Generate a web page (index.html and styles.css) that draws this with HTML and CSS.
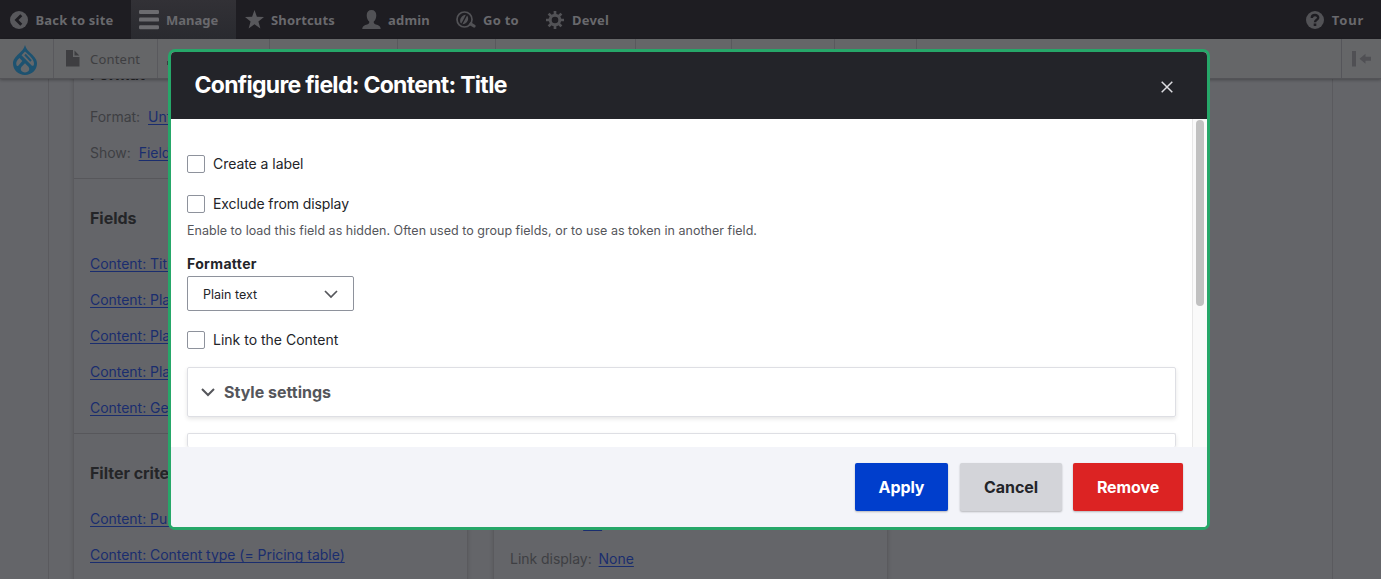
FILE: index.html
```html
<!DOCTYPE html>
<html lang="en">
<head>
<meta charset="utf-8">
<title>Configure field: Content: Title</title>
<link rel="stylesheet" href="styles.css">
</head>
<body>
<header class="toolbar">
  <nav class="bar">
    <a class="tab tab-back"><svg width="18" height="18" viewBox="0 0 18 18"><circle cx="9" cy="9" r="9" fill="#58585c"/><path d="M11.3 4.2 6.5 9l4.8 4.8" fill="none" stroke="#1e1d22" stroke-width="2.8"/></svg><span>Back to site</span></a>
    <a class="tab tab-manage"><svg width="20" height="20" viewBox="0 0 20 20" fill="#6c6c70"><rect y="0" width="20" height="4" rx="1.2"/><rect y="7.6" width="20" height="4" rx="1.2"/><rect y="15.2" width="20" height="4" rx="1.2"/></svg><span>Manage</span></a>
    <a class="tab tab-shortcuts"><svg width="19" height="19" viewBox="0 0 19 19" fill="#58585c"><path d="M9.5 0l2.4 6.8 7.1.2-5.6 4.4 2 7-5.900-4.100L3.600 18.400l2-7L0 7l7.100-.2z"/></svg><span>Shortcuts</span></a>
    <a class="tab tab-user"><svg width="19" height="20" viewBox="0 0 19 20" fill="#525256"><path d="M9.500 0C6.500 0 4.700 2 4.700 5.200c0 2.700 1 5 2.500 6.300.4 1.700-.3 2.300-2.100 3C2.500 15.300.300 16 .300 19h18.400c0-3-2.200-3.700-4.800-4.500-1.800-.7-2.500-1.300-2.100-3 1.500-1.300 2.500-3.600 2.500-6.300C14.300 2 12.500 0 9.500 0z"/></svg><span>admin</span></a>
    <a class="tab tab-goto"><svg width="20" height="18" viewBox="0 0 20 18"><circle cx="8.500" cy="8.500" r="7.500" fill="none" stroke="#525256" stroke-width="1.700"/><path d="M4.300 11.500C3.500 7.500 6.200 4 9.800 3.800 8.600 6.500 7.400 9 5.300 12.500zM6.500 13.200c1.500-3 3-5.500 4.600-8.700 2.600 3.200.2 8.600-4.600 8.700z" fill="#525256"/><path d="M12.500 13.500l2-2.500 4.700 3c1.200 1-.2 3.300-1.700 2.600z" fill="#525256"/></svg><span>Go to</span></a>
    <a class="tab tab-devel"><svg width="18" height="18" viewBox="0 0 18 18"><circle cx="9" cy="9" r="4.800" fill="none" stroke="#525256" stroke-width="3"/><g stroke="#525256" stroke-width="2.700"><path d="M9 0v4M9 14v4M0 9h4M14 9h4M2.600 2.600l2.900 2.900M12.500 12.500l2.900 2.900M2.600 15.400l2.900-2.900M12.500 5.500l2.900-2.900"/></g></svg><span>Devel</span></a>
    <a class="tab tab-tour"><svg width="18" height="18" viewBox="0 0 18 18"><circle cx="9" cy="9" r="9" fill="#525256"/><path d="M5.800 7C5.800 3 12.200 3.200 12.200 6.700 12.200 8.900 9 8.700 9 11.300" fill="none" stroke="#1e1d22" stroke-width="2.400"/><rect x="7.700" y="12.500" width="2.600" height="2.500" fill="#1e1d22"/></svg><span>Tour</span></a>
  </nav>
  <nav class="tray">
    <a class="tray-item w-logo"><svg width="24" height="30" viewBox="0 0 24 30"><path d="M12 0C11 4 8.500 6 5.500 9 2.500 12 0 14.500 0 18.500 0 25 5.400 30 12 30s12-5 12-11.500c0-4-2.500-6.500-5.500-9.500C15.500 6 13 4 12 0z" fill="#1d5270"/><g fill="#65686b"><path d="M12 18.300l3.200 3.200c2.400 2.600.4 5.900-3.200 5.900s-5.600-3.300-3.200-5.900z"/><path d="M6.500 13l2.800 2.900-3.800 4.600c-.9.900-1.700.8-2.100-.4-.9-2.800.8-5 3.100-7.100z"/><path d="M12 6.500c3.500 3.200 9.400 7.800 9 12.400-.2 2.100-1.400 2.600-2.800 1.100L8.500 10.300z"/></g><path d="M12 9.500l6 6.500" stroke="#1d5270" stroke-width="2"/></svg></a>
    <a class="tray-item w-content"><svg width="14" height="17" viewBox="0 0 14 17" fill="#3e3e41"><path d="M0 0h7v7h6.500v9.500H0zM8.500.5l4.800 5H8.500z"/></svg><span>Content</span></a>
    <a class="tray-item w-structure"><svg width="16" height="16" viewBox="0 0 16 16" fill="#3e3e41"><path d="M6 1h4v4H9v3h5v6h-4v-4H6v4H0V10h2V8h5V5H6z"/></svg></a>
    <a class="tray-item w-appearance"></a>
    <a class="tray-item w-extend"></a>
    <a class="tray-item w-config"></a>
    <a class="tray-item w-people"></a>
    <a class="tray-item w-reports"></a>
    <a class="tray-item w-help"></a>
    <a class="tray-toggle"><svg width="20" height="16" viewBox="0 0 20 16" fill="#505054"><path d="M0 0h4v15.500H0zM7.500 7.700l6-5v3H19v4h-5.500v3z"/></svg></a>
  </nav>
</header>
<main class="page">
  <section class="column">
    <div class="bucket bucket-format">
      <h3>Format</h3>
      <p>Format: <a>Unformatted list</a></p>
      <p>Show: <a>Fields</a></p>
    </div>
    <div class="bucket">
      <h3>Fields</h3>
      <p><a>Content: Title</a></p>
      <p><a>Content: Plan</a></p>
      <p><a>Content: Plan</a></p>
      <p><a>Content: Plan</a></p>
      <p><a>Content: Get</a></p>
    </div>
    <div class="bucket bucket-filter">
      <h3>Filter criteria</h3>
      <p><a>Content: Published</a></p>
      <p><a>Content: Content type (= Pricing table)</a></p>
    </div>
  </section>
  <section class="column column-second">
    <p>Use AJAX <a>No</a></p>
    <p>Link display: <a>None</a></p>
  </section>
</main>
<div class="dialog" role="dialog">
  <div class="dialog-title">
    <h1>Configure field: Content: Title</h1>
    <svg class="close" width="12" height="12" viewBox="0 0 12 12"><path d="M.7.7l10.600 10.600M11.300.7.7 11.300" stroke="#dcdce0" stroke-width="1.500"/></svg>
  </div>
  <div class="dialog-body">
    <form class="fields">
      <label class="check"><i class="box"></i><span class="t-create">Create a label</span></label>
      <label class="check check-exclude"><i class="box"></i><span class="t-exclude">Exclude from display</span></label>
      <p class="help">Enable to load this field as hidden. Often used to group fields, or to use as token in another field.</p>
      <p class="field-label">Formatter</p>
      <div class="select"><span>Plain text</span><svg width="14" height="9" viewBox="0 0 14 9"><path d="M1 1l6 6 6-6" fill="none" stroke="#55565b" stroke-width="1.700"/></svg></div>
      <label class="check check-link"><i class="box"></i><span class="t-link">Link to the Content</span></label>
      <div class="details"><svg width="14" height="9" viewBox="0 0 14 9"><path d="M1 1l6 6 6-6" fill="none" stroke="#55565b" stroke-width="2"/></svg><span>Style settings</span></div>
      <div class="details details-cut"></div>
    </form>
    <div class="scrollbar"><div class="thumb"></div></div>
  </div>
  <div class="dialog-actions">
    <button class="button apply">Apply</button>
    <button class="button cancel">Cancel</button>
    <button class="button remove">Remove</button>
  </div>
</div>
</body>
</html>
```
FILE: styles.css
```css
* { box-sizing: border-box; }
body {
  margin: 0;
  height: 579px;
  overflow: hidden;
  background: #646569;
  color: #3e3f43;
  font-family: Inter, "Liberation Sans", sans-serif;
}
h1, h3, p { margin: 0; }
svg { flex: none; display: block; }

.toolbar {
  position: relative;
  z-index: 1;
  font-family: "Noto Sans", "Open Sans", sans-serif;
}
.bar {
  display: flex;
  height: 39px;
  background: #1e1d22;
  color: #69696d;
  font-size: 13px;
  font-weight: 700;
}
.tab {
  display: flex;
  align-items: center;
  gap: 7px;
  white-space: nowrap;
}
.tab span { padding-top: 1px; letter-spacing: .2px; }
.tab-back { width: 131px; padding-left: 10px; }
.tab-back span { margin-left: .5px; letter-spacing: .2px; }
.tab-manage { width: 105px; padding-left: 8px; background: linear-gradient(#323136, #292a2f); }
.tab-manage span { letter-spacing: 0; }
.tab-shortcuts { width: 125px; padding-left: 9px; }
.tab-shortcuts span { letter-spacing: .15px; }
.tab-user { width: 95px; padding-left: 1px; }
.tab-goto { width: 90px; }
.tab-goto span { letter-spacing: .25px; }
.tab-devel { gap: 8px; }
.tab-tour { margin-left: auto; gap: 8px; padding-right: 17px; }
.tab-tour span { letter-spacing: .8px; }

.tray {
  display: flex;
  height: 40px;
  background: #656668;
  border-bottom: 1px solid #535357;
  box-shadow: 0 1px 3px rgba(0, 0, 0, .3);
  color: #3e3e41;
  font-size: 13px;
}
.tray-item {
  display: flex;
  align-items: center;
  border-right: 1px solid #59595d;
}
.w-logo { width: 54px; padding: 3px 0 0 13px; }
.w-content { width: 104px; padding-left: 12px; gap: 10px; }
.w-content span { letter-spacing: .2px; }
.w-structure { width: 112px; padding-left: 9px; }
.w-appearance { width: 128px; }
.w-extend { width: 98px; }
.w-config { width: 140px; }
.w-people { width: 96px; }
.w-reports { width: 103px; }
.w-help { width: 82px; }
.tray-toggle {
  display: flex;
  align-items: center;
  width: 40px;
  margin-left: auto;
  padding-left: 10px;
  border-left: 1px solid #55555a;
}

.page {
  display: flex;
  align-items: flex-start;
  gap: 25px;
  width: 1285px;
  height: 522px;
  margin: -22px 0 0 48px;
  padding-left: 24px;
  border: solid #5a5a5e;
  border-width: 0 1px;
  font-size: 14px;
}
.column {
  width: 395px;
  height: 522px;
  border: solid #5a5a5e;
  border-width: 0 1px;
  box-shadow: 0 2px 4px rgba(0, 0, 0, .15);
}
.bucket { height: 255px; padding: 21px 16px 0; border-bottom: 1px solid #57575b; }
.bucket-format { height: 122px; padding-top: 0; }
.bucket-filter { height: 145px; border-bottom: 0; }
.bucket h3 {
  height: 36px;
  margin-bottom: 10px;
  color: #242528;
  font-size: 16px;
  line-height: 36px;
  letter-spacing: -.03px;
}
.bucket-format h3 { height: 34px; line-height: 34px; margin-bottom: 8px; }
.column p { height: 36px; line-height: 36px; white-space: nowrap; letter-spacing: -.03px; }
.column a {
  margin-left: 3px;
  color: #1a2d6e;
  text-decoration: underline;
  text-decoration-thickness: 1px;
  text-underline-offset: 2px;
  text-decoration-skip-ink: none;
}
.bucket p a { margin-left: 0; }
.bucket-format p a { margin-left: 4px; }
.column-second { padding: 448px 16px 0; }

.dialog {
  position: absolute;
  z-index: 2;
  left: 168px;
  top: 49px;
  display: flex;
  flex-direction: column;
  width: 1042px;
  height: 481px;
  border: 3px solid #26a769;
  border-radius: 7px;
  overflow: hidden;
  background: #fff;
  color: #232429;
}
.dialog-title {
  display: flex;
  align-items: center;
  justify-content: space-between;
  height: 67px;
  padding: 0 34px 0 24px;
  background: #232429;
  color: #fff;
}
.dialog-title h1 { margin: -2px 0 0 -.5px; font-size: 23px; line-height: 30px; letter-spacing: -.71px; }
.close { margin-top: 2px; }
.dialog-body { display: flex; height: 328px; overflow: hidden; }
.fields { flex: 1; padding: 35px 16px 0; }
.check { display: flex; align-items: center; gap: 8px; height: 20px; font-size: 14px; }
.check span { margin-top: -2px; }
.t-create, .t-exclude { letter-spacing: -.05px; }
.t-exclude { letter-spacing: -.09px; }
.box { width: 18px; height: 18px; border: 1px solid #8e929c; border-radius: 2px; }
.check-exclude { margin-top: 20px; }
.help { margin-top: 7px; color: #55565b; font-size: 12.500px; line-height: 20px; letter-spacing: .025px; white-space: nowrap; }
.field-label { margin-top: 13px; font-size: 14px; font-weight: 700; line-height: 20px; letter-spacing: .35px; }
.select {
  display: flex;
  align-items: center;
  justify-content: space-between;
  width: 167px;
  height: 35px;
  margin-top: 2px;
  padding: 1px 15px 0;
  border: 1px solid #8e929c;
  border-radius: 2px;
  font-size: 12.500px;
}
.check-link { margin-top: 19px; }
.details {
  display: flex;
  align-items: center;
  gap: 9px;
  height: 50px;
  margin-top: 17px;
  padding-left: 13px;
  border: 1px solid #dedfe4;
  border-radius: 2px;
  box-shadow: 0 2px 4px rgba(0, 0, 0, .1);
  color: #55565b;
  font-size: 16px;
  font-weight: 700;
}
.details-cut { height: 14px; margin-top: 16px; border-bottom: 0; }
.scrollbar { width: 15px; padding: 1px 3px; background: #fafafa; border-left: 1px solid #e8e8e8; }
.thumb { width: 8px; height: 186px; border-radius: 4px; background: #c1c1c1; }
.dialog-actions {
  display: flex;
  justify-content: flex-end;
  gap: 11px;
  height: 80px;
  padding: 16px 24px;
  background: #f3f4f9;
}
.button {
  height: 48px;
  padding: 0;
  border: 0;
  border-radius: 2px;
  box-shadow: 0 1px 2px rgba(0, 0, 0, .25);
  color: #fff;
  font: 700 16px Inter, "Liberation Sans", sans-serif;
}
.apply { width: 93px; background: #003ecc; letter-spacing: -.1px; }
.cancel { width: 102px; margin-left: 1px; background: #d3d4d9; color: #232429; letter-spacing: -.1px; }
.remove { width: 110px; background: #dc2323; letter-spacing: -.1px; }
```
